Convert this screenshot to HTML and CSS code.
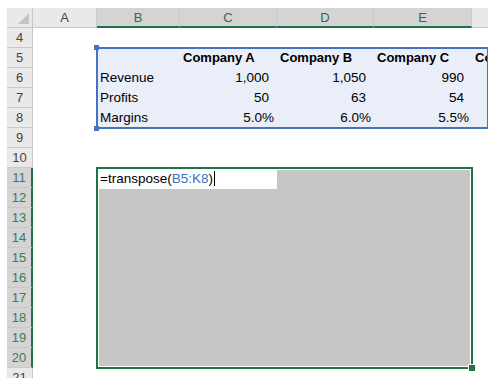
FILE: index.html
```html
<!DOCTYPE html>
<html lang="en">

<head>
    <meta charset="UTF-8">
    <meta name="viewport" content="width=device-width, initial-scale=1.0">
    <title>Transpose</title>
    <link rel="stylesheet" href="styles.css">
</head>

<body>
    <div class="sheet">
        <div class="corner"><span class="tri"></span></div>
        <div class="colhead">A</div>
        <div class="colhead on">B</div>
        <div class="colhead on">C</div>
        <div class="colhead on">D</div>
        <div class="colhead on">E</div>
        <div class="colhead last"></div>

        <div class="rowhead">4</div>
        <div class="rowhead">5</div>
        <div class="rowhead">6</div>
        <div class="rowhead">7</div>
        <div class="rowhead">8</div>
        <div class="rowhead">9</div>
        <div class="rowhead">10</div>
        <div class="rowhead on">11</div>
        <div class="rowhead on">12</div>
        <div class="rowhead on">13</div>
        <div class="rowhead on">14</div>
        <div class="rowhead on">15</div>
        <div class="rowhead on">16</div>
        <div class="rowhead on">17</div>
        <div class="rowhead on">18</div>
        <div class="rowhead on">19</div>
        <div class="rowhead on">20</div>
        <div class="rowhead">21</div>

        <div class="tbl">
            <div class="c"></div>
            <div class="c hd">Company A</div>
            <div class="c hd">Company B</div>
            <div class="c hd">Company C</div>
            <div class="c hd">Company D</div>

            <div class="c">Revenue</div>
            <div class="c num">1,000</div>
            <div class="c num">1,050</div>
            <div class="c num">990</div>
            <div class="c"></div>

            <div class="c">Profits</div>
            <div class="c num">50</div>
            <div class="c num">63</div>
            <div class="c num">54</div>
            <div class="c"></div>

            <div class="c">Margins</div>
            <div class="c pct">5.0%</div>
            <div class="c pct">6.0%</div>
            <div class="c pct">5.5%</div>
            <div class="c"></div>
        </div>

        <div class="sel">
            <div class="active">=transpose(<span class="ref">B5:K8</span>)<span class="caret"></span></div>
            <span class="fill"></span>
        </div>
    </div>
</body>

</html>
```

FILE: styles.css
```css
body {
    margin: 0;
    background: #fff;
    font-family: "Liberation Sans", Arial, sans-serif;
    font-size: 13px;
    color: #000;
}

.sheet {
    margin: 8px 0 0 7px;
    width: 481px;
    height: 370px;
    overflow: hidden;
    display: grid;
    grid-template-columns: 26px 64px 83px 97px 97px 98px 16px;
    grid-template-rows: repeat(19, 20px);
}

.corner,
.colhead,
.rowhead {
    box-sizing: border-box;
    background: #e9e9e9;
    border-right: 1px solid #c9c9c9;
    border-bottom: 1px solid #c9c9c9;
    color: #444;
    display: flex;
    align-items: center;
    justify-content: center;
}

.corner {
    grid-column: 1;
    grid-row: 1;
    position: relative;
}

.tri {
    position: absolute;
    right: 3px;
    bottom: 3px;
    width: 0;
    height: 0;
    border-left: 11px solid transparent;
    border-bottom: 11px solid #c4c4c4;
}

.colhead.on {
    background: #d4d4d4;
    color: #2f6b49;
    border-bottom: 2px solid #217346;
}

.colhead.last {
    border-right: none;
}

.rowhead {
    grid-column: 1;
}

.rowhead.on {
    background: #d4d4d4;
    color: #3f7a56;
    border-right: 2px solid #217346;
}

.tbl {
    grid-column: 3 / 8;
    grid-row: 3 / 7;
    position: relative;
    background: #e9eef8;
    outline: 2px solid #4672c2;
    outline-offset: -1px;
    display: grid;
    grid-template-columns: 83px 97px 97px 98px 16px;
    grid-template-rows: repeat(4, 20px);
    font-size: 13.5px;
}

.tbl::before,
.tbl::after {
    content: "";
    position: absolute;
    left: -3px;
    width: 5px;
    height: 5px;
    background: #4672c2;
}

.tbl::before {
    top: -3px;
}

.tbl::after {
    bottom: -3px;
}

.c {
    padding-left: 3px;
    line-height: 20px;
    white-space: nowrap;
    overflow: hidden;
}

.hd {
    font-weight: bold;
    font-size: 13px;
}

.num {
    text-align: right;
    padding-right: 8px;
}

.pct {
    text-align: right;
    padding-right: 3px;
}

.sel {
    grid-column: 3 / 7;
    grid-row: 9 / 19;
    position: relative;
    background: #c6c6c6;
    outline: 2px solid #217346;
    outline-offset: -1px;
    box-shadow: inset 0 0 0 2px #fff;
}

.active {
    width: 180px;
    height: 21px;
    background: #fff;
    box-sizing: border-box;
    padding-left: 3px;
    line-height: 21px;
    font-size: 13.5px;
    white-space: nowrap;
}

.ref {
    color: #3b6fc6;
}

.caret {
    display: inline-block;
    width: 1px;
    height: 15px;
    margin-left: 1px;
    background: #000;
    vertical-align: -3px;
}

.fill {
    position: absolute;
    right: -4px;
    bottom: -4px;
    width: 6px;
    height: 6px;
    background: #217346;
    border: 1px solid #fff;
}
```
